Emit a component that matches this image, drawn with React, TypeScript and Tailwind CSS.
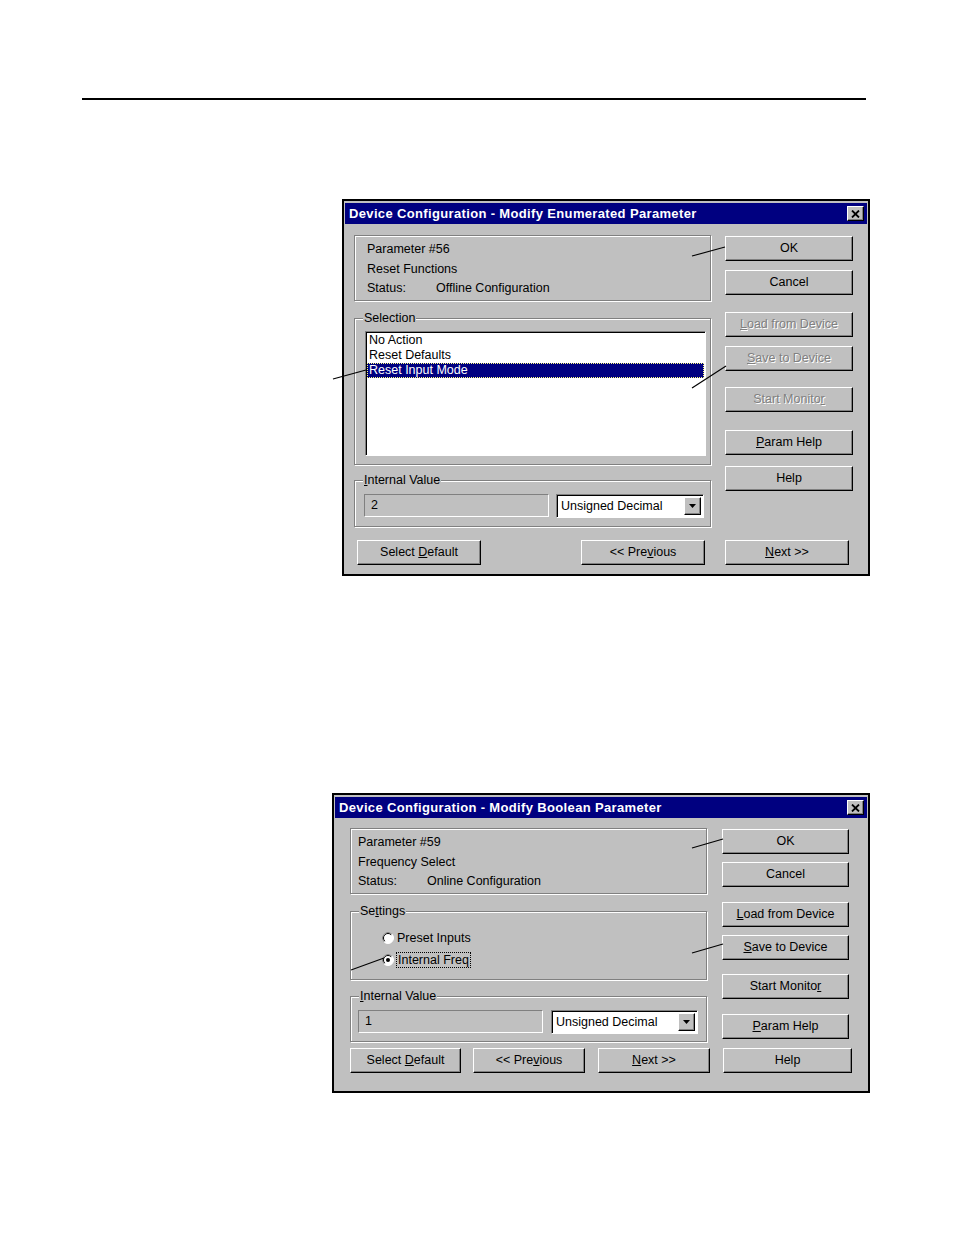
import React from 'react';

// Win95-style bevels
const raised = 'border border-t-white border-l-white border-r-black border-b-black shadow-[inset_-1px_-1px_0_#808080]';
const sunken = 'border border-t-[#808080] border-l-[#808080] border-r-white border-b-white shadow-[inset_1px_1px_0_#000]';
const flatSunken = 'border border-t-[#808080] border-l-[#808080] border-r-white border-b-white';
const etched = 'border border-[#808080] shadow-[inset_1px_1px_0_#fff,1px_1px_0_#fff]';

interface BtnProps {
  readonly children: React.ReactNode;
  readonly disabled?: boolean;
  readonly className?: string;
}

const Btn: React.FC<BtnProps> = ({ children, disabled = false, className = '' }) => (
  <div
    className={`${raised} h-[25px] bg-[#c0c0c0] flex items-center justify-center whitespace-nowrap ${
      disabled ? 'text-[#808080] [text-shadow:1px_1px_0_#fff]' : 'text-black'
    } ${className}`}
  >
    <span>{children}</span>
  </div>
);

const GroupBox: React.FC<{ label: React.ReactNode; className?: string; children: React.ReactNode }> = ({
  label,
  className = '',
  children,
}) => (
  <div className={`relative ${etched} ${className}`}>
    <span className="absolute left-[8px] -top-[9px] bg-[#c0c0c0] px-[1px] leading-[16px]">{label}</span>
    {children}
  </div>
);

const TitleBar: React.FC<{ title: string }> = ({ title }) => (
  <div className="h-[21px] bg-[#000080] flex items-center justify-between pl-[4px] pr-[3px]">
    <span className="text-white font-bold text-[13px] tracking-[0.35px]">{title}</span>
    <div className={`w-[17px] h-[15px] bg-[#c0c0c0] ${raised} flex items-center justify-center`}>
      <svg width="9" height="8" viewBox="0 0 9 8">
        <path d="M1 0.5 L8 7.5 M8 0.5 L1 7.5" stroke="#000" strokeWidth="1.8" />
      </svg>
    </div>
  </div>
);

const Dropdown: React.FC<{ className?: string }> = ({ className = '' }) => (
  <div className={`${sunken} bg-white h-[24px] flex items-center justify-between pl-[4px] pr-[2px] ${className}`}>
    <span>Unsigned Decimal</span>
    <div className={`${raised} bg-[#c0c0c0] w-[17px] h-[18px] flex items-center justify-center`}>
      <svg width="7" height="4" viewBox="0 0 7 4">
        <path d="M0 0h7L3.5 4z" fill="#000" />
      </svg>
    </div>
  </div>
);

const Radio: React.FC<{ checked?: boolean }> = ({ checked = false }) => (
  <svg width="12" height="12" viewBox="0 0 12 12">
    <circle cx="6" cy="6" r="5.5" fill="#fff" stroke="#fff" />
    <path d="M2.1 9.9 A5.5 5.5 0 0 1 9.9 2.1" fill="none" stroke="#808080" />
    <path d="M2.8 9.2 A4.5 4.5 0 0 1 9.2 2.8" fill="none" stroke="#000" />
    {checked && <circle cx="6" cy="6" r="2" fill="#000" />}
  </svg>
);

const InfoPanel: React.FC<{ num: string; name: string; status: string; pad: string }> = ({ num, name, status, pad }) => (
  <div className={`${etched} h-[66px] pt-[4px] ${pad} leading-[19.5px]`}>
    <div>Parameter #{num}</div>
    <div>{name}</div>
    <div className="flex">
      <span className="w-[69px]">Status:</span>
      <span>{status}</span>
    </div>
  </div>
);

const ValueField: React.FC<{ value: string }> = ({ value }) => (
  <div className={`${flatSunken} h-[23px] w-[185px] flex items-center pl-[6px] bg-[#c0c0c0]`}>{value}</div>
);

const EnumeratedDialog: React.FC = () => (
  <div className="mt-[99px] ml-[342px] w-[528px] border-2 border-black bg-[#c0c0c0] pt-[2px] px-[1px] pb-[9px]">
    <TitleBar title="Device Configuration - Modify Enumerated Parameter" />
    <div className="flex mt-[11px] ml-[9px]">
      {/* Left column */}
      <div className="w-[357px]">
        <InfoPanel num="56" name="Reset Functions" status="Offline Configuration" pad="pl-[12px]" />
        <GroupBox label="Selection" className="mt-[17px] h-[147px]">
          <div className={`${sunken} bg-white ml-[10px] mt-[12px] w-[341px] h-[125px] pt-[1px] px-[1px]`}>
            <div className="pl-[2px] leading-[15px]">No Action</div>
            <div className="pl-[2px] leading-[15px]">Reset Defaults</div>
            <div className="bg-[#000080] text-white border border-dotted border-[#ffff80] pl-[1px] leading-[13px]">
              Reset Input Mode
            </div>
          </div>
        </GroupBox>
        <GroupBox
          label={
            <>
              <u>I</u>nternal Value
            </>
          }
          className="mt-[15px] h-[47px] flex items-start pt-[13px] pl-[9px]"
        >
          <ValueField value="2" />
          <Dropdown className="ml-[7px] w-[148px]" />
        </GroupBox>
      </div>
      {/* Right column */}
      <div className="ml-[14px] w-[128px] flex flex-col">
        <Btn className="mt-[1px]">OK</Btn>
        <Btn className="mt-[9px]">Cancel</Btn>
        <Btn className="mt-[17px]" disabled>
          <u>L</u>oad from Device
        </Btn>
        <Btn className="mt-[9px]" disabled>
          <u>S</u>ave to Device
        </Btn>
        <Btn className="mt-[16px]" disabled>
          Start Monito<u>r</u>
        </Btn>
        <Btn className="mt-[18px]">
          <u>P</u>aram Help
        </Btn>
        <Btn className="mt-[11px]">Help</Btn>
      </div>
    </div>
    <div className="flex mt-[13px] ml-[12px]">
      <Btn className="w-[124px]">
        Select <u>D</u>efault
      </Btn>
      <Btn className="ml-[100px] w-[124px]">
        &lt;&lt; Pre<u>v</u>ious
      </Btn>
      <Btn className="ml-[20px] w-[124px]">
        <u>N</u>ext &gt;&gt;
      </Btn>
    </div>
  </div>
);

const BooleanDialog: React.FC = () => (
  <div className="mt-[217px] ml-[332px] w-[538px] border-2 border-black bg-[#c0c0c0] pt-[2px] px-[1px] pb-[18px]">
    <TitleBar title="Device Configuration - Modify Boolean Parameter" />
    <div className="flex mt-[10px] ml-[15px]">
      {/* Left column */}
      <div className="w-[357px]">
        <InfoPanel num="59" name="Frequency Select" status="Online Configuration" pad="pl-[7px]" />
        <GroupBox
          label={
            <>
              Se<u>t</u>tings
            </>
          }
          className="mt-[17px] h-[69px]"
        >
          <div className="ml-[31px] mt-[19px] flex items-center h-[14px]">
            <Radio />
            <span className="ml-[1px] px-[1px] border border-transparent">Preset Inputs</span>
          </div>
          <div className="ml-[31px] mt-[8px] flex items-center h-[14px]">
            <Radio checked />
            <span className="ml-[2px] px-[1px] border border-dotted border-black leading-[14px]">Internal Freq</span>
          </div>
        </GroupBox>
        <GroupBox
          label={
            <>
              <u>I</u>nternal Value
            </>
          }
          className="mt-[16px] h-[46px] flex items-start pt-[13px] pl-[7px]"
        >
          <ValueField value="1" />
          <Dropdown className="ml-[8px] w-[147px]" />
        </GroupBox>
      </div>
      {/* Right column */}
      <div className="ml-[15px] w-[127px] flex flex-col">
        <Btn className="mt-[1px]">OK</Btn>
        <Btn className="mt-[8px]">Cancel</Btn>
        <Btn className="mt-[15px]">
          <u>L</u>oad from Device
        </Btn>
        <Btn className="mt-[8px]">
          <u>S</u>ave to Device
        </Btn>
        <Btn className="mt-[14px]">
          Start Monito<u>r</u>
        </Btn>
        <Btn className="mt-[15px]">
          <u>P</u>aram Help
        </Btn>
      </div>
    </div>
    <div className="flex mt-[6px] ml-[15px]">
      <Btn className="w-[111px]">
        Select <u>D</u>efault
      </Btn>
      <Btn className="ml-[12px] w-[112px]">
        &lt;&lt; Pre<u>v</u>ious
      </Btn>
      <Btn className="ml-[13px] w-[112px]">
        <u>N</u>ext &gt;&gt;
      </Btn>
      <Btn className="ml-[13px] w-[129px]">Help</Btn>
    </div>
  </div>
);

export default function App() {
  return (
    <div className="relative w-[954px] min-h-[1235px] bg-white text-black text-[12.5px] font-['Liberation_Sans',Arial,sans-serif] overflow-hidden">
      <div className="pt-[98px]">
        <div className="ml-[82px] w-[784px] h-[2px] bg-black" />
      </div>
      <EnumeratedDialog />
      <BooleanDialog />

      {/* Callout leader lines */}
      <svg className="absolute top-0 left-0 pointer-events-none" width="954" height="1235">
        <g stroke="#000" strokeWidth="1.2">
          <line x1="692" y1="256" x2="725" y2="247" />
          <line x1="333" y1="379" x2="366" y2="370" />
          <line x1="692" y1="388" x2="726" y2="366" />
          <line x1="692" y1="848" x2="723" y2="839" />
          <line x1="692" y1="953" x2="723" y2="944" />
          <line x1="351" y1="970" x2="384" y2="958" />
        </g>
      </svg>
    </div>
  );
}
